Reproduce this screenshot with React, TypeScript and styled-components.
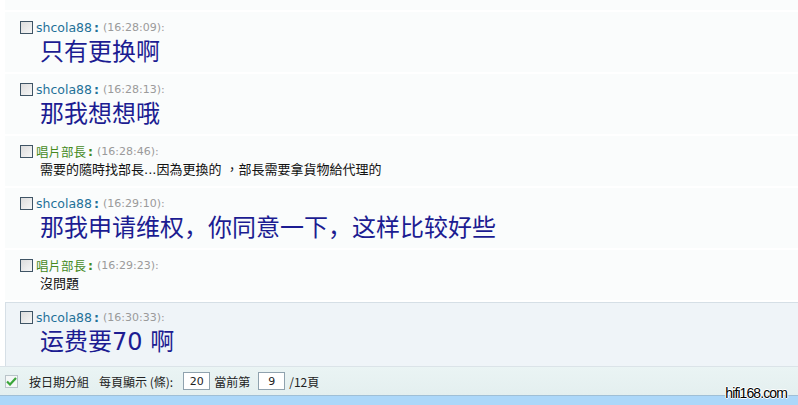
import React from "react";
import styled, { createGlobalStyle } from "styled-components";

const Global = createGlobalStyle`
  html, body { margin: 0; padding: 0; background: #ffffff; }
  body { width: 798px; height: 405px; overflow: hidden; font-family: "DejaVu Sans", Verdana, sans-serif; }
`;

const Page = styled.div`
  position: relative;
  width: 798px;
  height: 405px;
  display: flex;
  flex-direction: column;
  background: #ffffff;
  overflow: hidden;
`;

const List = styled.div`
  flex: 1;
  display: flex;
  flex-direction: column;
  justify-content: flex-end;
  gap: 2px;
  padding-left: 5px;
  overflow: hidden;
`;

const Row = styled.div<{ $big: boolean; $active?: boolean }>`
  flex: none;
  display: flex;
  flex-direction: column;
  box-sizing: border-box;
  height: ${(p) => (p.$active ? 64 : p.$big ? 60 : 50)}px;
  padding: ${(p) => (p.$active ? "6px 0 0 14px" : "7px 0 0 15px")};
  background: ${(p) => (p.$active ? "#eff4f8" : "#fafcfc")};
  border: ${(p) => (p.$active ? "1px solid #d6dfe6" : "none")};
  border-right: none;
  border-bottom: none;
`;

const Partial = styled.div`
  flex: none;
  height: 12px;
  background: #fafcfc;
`;

const Header = styled.div`
  display: flex;
  align-items: center;
  height: 16px;
`;

const Box = styled.span`
  display: inline-block;
  box-sizing: border-box;
  width: 13px;
  height: 13px;
  border: 1px solid #3f5465;
  background: linear-gradient(135deg, #dcdcdc, #f6f6f6);
  margin-right: 3px;
`;

const Name = styled.span<{ $green: boolean }>`
  font-size: 12.5px;
  color: ${(p) => (p.$green ? "#458a1d" : "#1f7198")};
  font-family: "DejaVu Sans", Verdana, "Noto Sans CJK TC", sans-serif;
`;

const Colon = styled.span<{ $green: boolean }>`
  font-size: 12.5px;
  font-weight: bold;
  color: ${(p) => (p.$green ? "#458a1d" : "#1f7198")};
  margin: 0 4px 0 2px;
`;

const Time = styled.span`
  font-size: 11px;
  color: #9a9a9a;
  font-family: "DejaVu Sans", Verdana, sans-serif;
`;

const BigMsg = styled.div<{ $active?: boolean }>`
  margin-top: ${(p) => (p.$active ? 3 : 3)}px;
  padding-left: 20px;
  font-size: 24px;
  line-height: 28px;
  color: #1c1c92;
  font-family: "DejaVu Sans", "Noto Sans CJK SC", sans-serif;
  white-space: nowrap;
`;

const SmallMsg = styled.div`
  margin-top: 3px;
  padding-left: 20px;
  font-size: 13px;
  line-height: 16px;
  color: #111111;
  font-family: "DejaVu Sans", "Noto Sans CJK TC", sans-serif;
  white-space: nowrap;
`;

const Footer = styled.div`
  flex: none;
  height: 28px;
  border-top: 1px solid #dbe3e8;
  background: linear-gradient(#eaf4f4, #e4efef);
  display: flex;
  align-items: center;
  padding-left: 5px;
  font-size: 12px;
  color: #222;
  font-family: "Noto Sans CJK TC", sans-serif;
`;

const Strip = styled.div`
  flex: none;
  height: 9px;
  border-top: 1px solid #9fbfd6;
  background: #acd7f9;
`;

const Check = styled.span`
  display: inline-flex;
  width: 13px;
  height: 13px;
  box-sizing: border-box;
  border: 1px solid #b9c4c9;
  background: #f4f7f7;
  margin-right: 11px;
  align-items: center;
  justify-content: center;
`;

const Label = styled.span<{ $gap?: number }>`
  margin-right: ${(p) => p.$gap ?? 4}px;
  white-space: nowrap;
`;

const Field = styled.span`
  display: inline-flex;
  box-sizing: border-box;
  width: 27px;
  height: 18px;
  border: 1px solid #8fa2ae;
  background: #ffffff;
  align-items: center;
  justify-content: center;
  font-size: 11px;
  font-family: "DejaVu Sans", sans-serif;
  margin-right: 4px;
`;

const Watermark = styled.div`
  position: absolute;
  right: 11px;
  bottom: 5px;
  font-family: "Liberation Sans", sans-serif;
  font-size: 14px;
  line-height: 14px;
  letter-spacing: -0.9px;
  color: #000;
  text-shadow: 1px 0 #fff, -1px 0 #fff, 0 1px #fff, 0 -1px #fff;
`;

type Msg = { name: string; time: string; text: string; big: boolean; green: boolean; active?: boolean };

const msgs: Msg[] = [
  { name: "shcola88", time: "(16:28:09):", text: "只有更换啊", big: true, green: false },
  { name: "shcola88", time: "(16:28:13):", text: "那我想想哦", big: true, green: false },
  { name: "唱片部長", time: "(16:28:46):", text: "需要的隨時找部長...因為更換的 ，部長需要拿貨物給代理的", big: false, green: true },
  { name: "shcola88", time: "(16:29:10):", text: "那我申请维权，你同意一下，这样比较好些", big: true, green: false },
  { name: "唱片部長", time: "(16:29:23):", text: "沒問題", big: false, green: true },
  { name: "shcola88", time: "(16:30:33):", text: "运费要70 啊", big: true, green: false, active: true },
];

export default function App() {
  return (
    <Page>
      <Global />
      <List>
        <Partial />
        {msgs.map((m, i) => (
          <Row key={i} $big={m.big} $active={m.active}>
            <Header>
              <Box />
              <Name $green={m.green}>{m.name}</Name>
              <Colon $green={m.green}>:</Colon>
              <Time>{m.time}</Time>
            </Header>
            {m.big ? <BigMsg $active={m.active}>{m.text}</BigMsg> : <SmallMsg>{m.text}</SmallMsg>}
          </Row>
        ))}
      </List>
      <Footer>
        <Check>
          <svg width="11" height="9" viewBox="0 0 11 9">
            <path d="M1 4.5 L4 7.5 L10 1" fill="none" stroke="#3aa63a" strokeWidth="2.2" />
          </svg>
        </Check>
        <Label $gap={10}>按日期分組</Label>
        <Label $gap={10}>每頁顯示 (條):</Label>
        <Field>20</Field>
        <Label $gap={8}>當前第</Label>
        <Field>9</Field>
        <Label>/12頁</Label>
      </Footer>
      <Strip />
      <Watermark>hifi168.com</Watermark>
    </Page>
  );
}
